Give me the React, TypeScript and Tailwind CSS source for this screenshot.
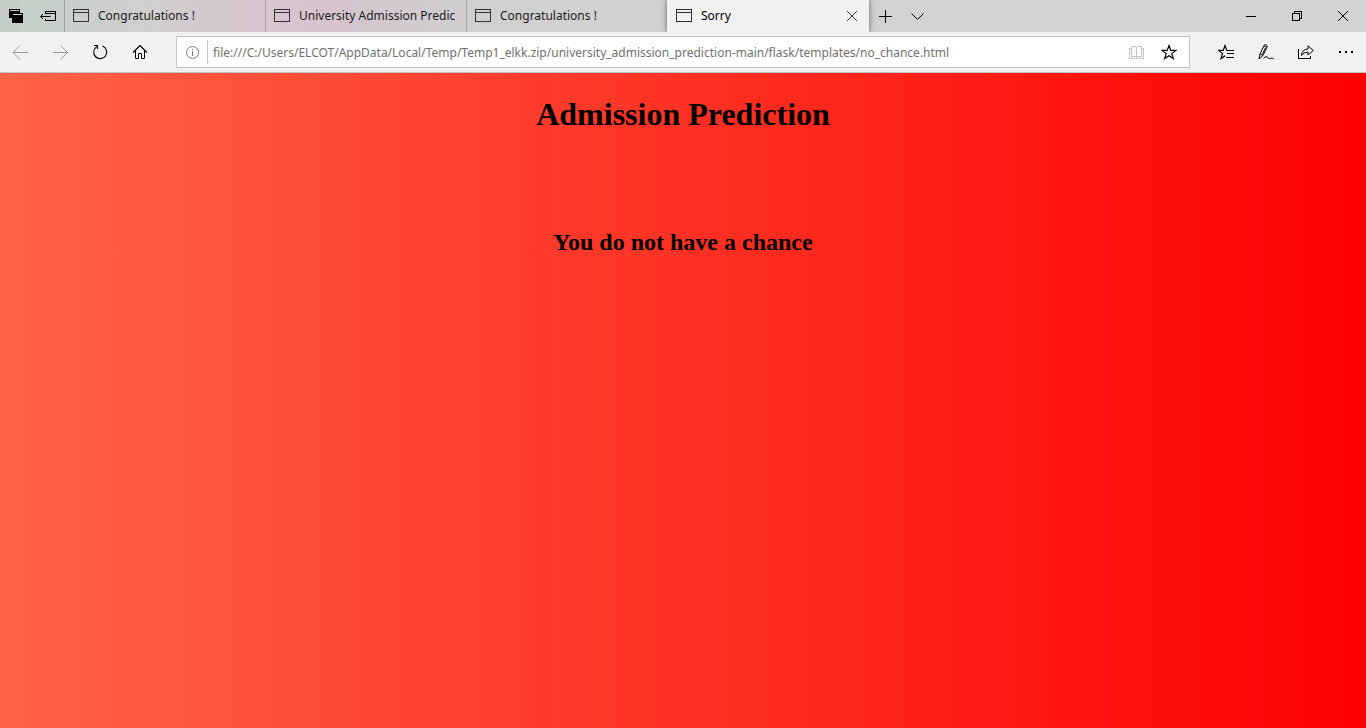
import type { ReactNode } from "react";

const ui = "font-['Noto_Sans','Open_Sans',sans-serif]";

function Icon({ children, size = 16, className = "" }: { children: ReactNode; size?: number; className?: string }) {
  return (
    <svg
      width={size}
      height={size}
      viewBox={`0 0 ${size} ${size}`}
      fill="none"
      stroke="currentColor"
      strokeWidth="1"
      aria-hidden="true"
      className={`shrink-0 ${className}`}
    >
      {children}
    </svg>
  );
}

function PageIcon() {
  return (
    <Icon className="text-[#333]">
      <path d="M0.5 1.5h15v12h-15zM0.5 4.5h15" shapeRendering="crispEdges" />
    </Icon>
  );
}

function IconButton({ label, className, children }: { label: string; className: string; children: ReactNode }) {
  return (
    <button type="button" aria-label={label} className={`flex shrink-0 items-center justify-center ${className}`}>
      {children}
    </button>
  );
}

function Tab({ title, active = false }: { title: string; active?: boolean }) {
  return (
    <div
      className={
        active
          ? "z-10 flex h-8 w-[202px] items-center bg-[#f1f1f1] pl-[9px] text-black shadow-[0_0_6px_rgba(0,0,0,0.55)]"
          : "flex h-8 w-[201px] items-center border-l border-[#a3a1a2] pl-2 text-[#1c1c1c]"
      }
    >
      <button
        type="button"
        role="tab"
        aria-selected={active}
        className="flex h-8 min-w-0 flex-1 items-center gap-[9px] overflow-hidden text-left text-xs whitespace-nowrap"
      >
        <PageIcon />
        <span className="overflow-hidden">{title}</span>
      </button>
      {active ? (
        <IconButton label="Close tab" className="h-8 w-[34px]">
          <Icon className="text-[#333]">
            <path d="M3 3l10 10M13 3L3 13" />
          </Icon>
        </IconButton>
      ) : (
        <span className="w-1" />
      )}
    </div>
  );
}

function TabStrip() {
  return (
    <header className="flex h-8 overflow-hidden bg-[linear-gradient(90deg,#c3cdc5_0px,#c9d0cb_70px,#d0cfcf_150px,#d6c6ce_240px,#d5c4cd_330px,#d0cdcf_440px,#d1d1d1_520px,#d3d3d3_100%)] text-black">
      <div className="flex w-16 shrink-0">
        <IconButton label="Tabs you've set aside" className="w-8">
          <Icon>
            <path d="M1 1h11v9H1zM3 5h12v10H3z" fill="currentColor" stroke="none" />
            <path d="M1 10h2v5H1z" fill="#c5cdc7" stroke="none" />
            <path d="M2 2.500h9M5 6.500h9M3.500 10v5" stroke="#c5cdc7" shapeRendering="crispEdges" />
          </Icon>
        </IconButton>
        <IconButton label="Set these tabs aside" className="w-8">
          <Icon>
            <path d="M5.500 6V3.500h10v9h-10v-2M5.500 5.500h10" shapeRendering="crispEdges" />
            <path d="M0.500 8.500h10M3 6l-2.500 2.500 2.500 2.500" />
          </Icon>
        </IconButton>
      </div>
      <div role="tablist" aria-label="Open tabs" className="flex">
        <Tab title="Congratulations !" />
        <Tab title="University Admission Predic" />
        <Tab title="Congratulations !" />
        <Tab title="Sorry" active />
      </div>
      <IconButton label="New tab" className="w-8">
        <Icon>
          <path d="M2 8.500h13M8.500 2v13" shapeRendering="crispEdges" />
        </Icon>
      </IconButton>
      <IconButton label="Show tab previews" className="w-8">
        <Icon>
          <path d="M2.500 5.500l6 6 6-6" />
        </Icon>
      </IconButton>
      <div className="ml-auto flex">
        <IconButton label="Minimize" className="w-[46px]">
          <Icon>
            <path d="M3 8.500h10" shapeRendering="crispEdges" />
          </Icon>
        </IconButton>
        <IconButton label="Restore" className="w-[46px]">
          <Icon>
            <path d="M3.500 5.500h7v7h-7zM5.500 5V3.500h7v7H11" shapeRendering="crispEdges" />
          </Icon>
        </IconButton>
        <IconButton label="Close window" className="w-[46px]">
          <Icon>
            <path d="M3 3l10 10M13 3L3 13" />
          </Icon>
        </IconButton>
      </div>
    </header>
  );
}

function Toolbar() {
  return (
    <nav
      aria-label="Browser toolbar"
      className="flex h-[41px] items-center border-b border-[#c2c5c7] bg-[#f1f1f1] text-black"
    >
      <IconButton label="Back" className="h-10 w-10 text-[#999]">
        <Icon>
          <path d="M1 8.500H16M8 1.500l-7 7 7 7" />
        </Icon>
      </IconButton>
      <IconButton label="Forward" className="h-10 w-10 text-[#999]">
        <Icon>
          <path d="M1 8.500h15M8.500 1.500l7 7-7 7" />
        </Icon>
      </IconButton>
      <IconButton label="Refresh" className="h-10 w-10">
        <Icon>
          <path d="M10.500 2.100a6.500 6.500 0 1 1-5.800.6M2 1.500h3.500V5" strokeWidth="1.100" />
        </Icon>
      </IconButton>
      <IconButton label="Home" className="h-10 w-10">
        <Icon>
          <path d="M1 8.500l7-7 7 7" strokeWidth="1.200" />
          <path d="M3.500 7v7.500h3v-5h3v5h3V7" />
        </Icon>
      </IconButton>
      <div className="ml-4 flex h-8 min-w-0 flex-1 items-center border border-[#c6c6c6] bg-white">
        <IconButton label="Site information" className="h-8 w-[30px] text-[#777]">
          <Icon>
            <circle cx="8.500" cy="8.500" r="6" />
            <path d="M8.500 7v5M8.500 5v1" shapeRendering="crispEdges" />
          </Icon>
        </IconButton>
        <input
          type="text"
          aria-label="Address"
          defaultValue="file:///C:/Users/ELCOT/AppData/Local/Temp/Temp1_elkk.zip/university_admission_prediction-main/flask/templates/no_chance.html"
          className="h-6 min-w-0 flex-1 border-l border-[#c6c6c6] bg-white pl-[5px] text-xs text-[#707070] outline-none"
        />
        <IconButton label="Reading view" className="h-8 w-8 text-[#c4c4c4]">
          <Icon>
            <path
              d="M7.500 3.500V13.500M2.500 2.500H6.500L7.500 3.500L8.500 2.500H12.500V12.500H2.500zM2 4.500H0.500V14.500H14.500V4.500H13"
              shapeRendering="crispEdges"
            />
          </Icon>
        </IconButton>
        <IconButton label="Add to favorites" className="mr-1 h-8 w-8">
          <Icon>
            <path
              d="M8 1.500l1.800 4.900h5.100l-4.100 3.200 1.500 5L8 11.700l-4.300 2.900 1.500-5L1.100 6.400h5.100z"
              strokeWidth="1.200"
            />
          </Icon>
        </IconButton>
      </div>
      <div className="ml-4 flex shrink-0">
        <IconButton label="Favorites" className="h-10 w-10">
          <Icon>
            <path
              d="M10.500 6.500H8.800L7 1.500 5.200 6.400H0.800l3.700 3.200-1.500 5L7.200 11.700"
              strokeWidth="1.200"
            />
            <path d="M9 6.500h7M9 9.500h7M8 13.500h8" shapeRendering="crispEdges" />
          </Icon>
        </IconButton>
        <IconButton label="Add notes" className="h-10 w-10">
          <Icon>
            <path d="M1 15l1-5L6.200 1.200Q7.500 0 8.800 1.200 9.400 2 9 3L5 11.500 1 15M2 10l3 1.500M6 2l3 1.500M7.500 4L4.500 10" />
            <path d="M5.500 14.500c2-2 3.500-2.500 4-1.500s.5 2 2 1.500 2.500-.5 4.300.5" />
          </Icon>
        </IconButton>
        <IconButton label="Share" className="h-10 w-10">
          <Icon>
            <path d="M0.500 5v9.500h12V11.500" shapeRendering="crispEdges" />
            <path d="M3.500 11.500C3.700 7.500 6 5.200 10 5V1.800L15.300 6.500 10 11V8.200C7 8.200 5 9.300 3.500 11.500z" />
          </Icon>
        </IconButton>
        <IconButton label="Settings and more" className="h-10 w-10">
          <Icon>
            <path d="M1 7h2v2H1zM7 7h2v2H7zM13 7h2v2h-2z" fill="currentColor" stroke="none" />
          </Icon>
        </IconButton>
      </div>
    </nav>
  );
}

export default function App() {
  return (
    <div className="flex min-h-screen flex-col">
      <div className={ui}>
        <TabStrip />
        <Toolbar />
      </div>
      <main className="flex flex-1 flex-col items-center bg-linear-to-r/srgb from-[#ff6347] to-[#ff0000] pt-[23px] text-center font-['Liberation_Serif',serif] font-bold text-black">
        <h1 className="text-[32px] leading-9">Admission Prediction</h1>
        <h2 className="mt-24 text-2xl leading-7">You do not have a chance</h2>
      </main>
    </div>
  );
}
